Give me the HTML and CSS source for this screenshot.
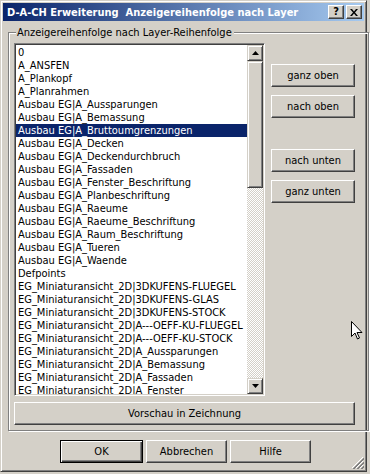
FILE: index.html
```html
<!DOCTYPE html>
<html lang="de">
<head>
    <meta charset="UTF-8">
    <title>D-A-CH Erweiterung Anzeigereihenfolge nach Layer</title>
    <link rel="stylesheet" href="styles.css">
</head>
<body>

<div class="window">
    <div class="titlebar">
        <span class="title">D-A-CH Erweiterung&nbsp; Anzeigereihenfolge nach Layer</span>
        <div class="caption-buttons">
            <span class="cap-btn help">?</span>
            <span class="cap-btn">
                <svg width="8" height="7" viewBox="0 0 8 7"><path d="M0 0h2l2 2.5 2-2.5h2l-3 3.5 3 3.5h-2l-2-2.5-2 2.5h-2l3-3.5z" fill="#000"/></svg>
            </span>
        </div>
    </div>

    <div class="client">
        <div class="group">
            <span class="group-label">Anzeigereihenfolge nach Layer-Reihenfolge</span>
            <div class="group-main">
                <div class="listbox">
                    <ul class="items">
                        <li>0</li>
                        <li>A_ANSFEN</li>
                        <li>A_Plankopf</li>
                        <li>A_Planrahmen</li>
                        <li>Ausbau EG|A_Aussparungen</li>
                        <li>Ausbau EG|A_Bemassung</li>
                        <li class="selected">Ausbau EG|A_Bruttoumgrenzungen</li>
                        <li>Ausbau EG|A_Decken</li>
                        <li>Ausbau EG|A_Deckendurchbruch</li>
                        <li>Ausbau EG|A_Fassaden</li>
                        <li>Ausbau EG|A_Fenster_Beschriftung</li>
                        <li>Ausbau EG|A_Planbeschriftung</li>
                        <li>Ausbau EG|A_Raeume</li>
                        <li>Ausbau EG|A_Raeume_Beschriftung</li>
                        <li>Ausbau EG|A_Raum_Beschriftung</li>
                        <li>Ausbau EG|A_Tueren</li>
                        <li>Ausbau EG|A_Waende</li>
                        <li>Defpoints</li>
                        <li>EG_Miniaturansicht_2D|3DKUFENS-FLUEGEL</li>
                        <li>EG_Miniaturansicht_2D|3DKUFENS-GLAS</li>
                        <li>EG_Miniaturansicht_2D|3DKUFENS-STOCK</li>
                        <li>EG_Miniaturansicht_2D|A---OEFF-KU-FLUEGEL</li>
                        <li>EG_Miniaturansicht_2D|A---OEFF-KU-STOCK</li>
                        <li>EG_Miniaturansicht_2D|A_Aussparungen</li>
                        <li>EG_Miniaturansicht_2D|A_Bemassung</li>
                        <li>EG_Miniaturansicht_2D|A_Fassaden</li>
                        <li>EG_Miniaturansicht_2D|A_Fenster</li>
                    </ul>
                    <div class="scrollbar">
                        <div class="sb-btn">
                            <svg width="7" height="4" viewBox="0 0 7 4"><path d="M3.5 0L7 4H0z" fill="#000"/></svg>
                        </div>
                        <div class="sb-track">
                            <div class="sb-thumb"></div>
                        </div>
                        <div class="sb-btn">
                            <svg width="7" height="4" viewBox="0 0 7 4"><path d="M0 0h7L3.5 4z" fill="#000"/></svg>
                        </div>
                    </div>
                </div>
                <div class="side">
                    <button class="btn">ganz oben</button>
                    <button class="btn">nach oben</button>
                    <button class="btn spaced">nach unten</button>
                    <button class="btn">ganz unten</button>
                </div>
            </div>
            <button class="btn wide">Vorschau in Zeichnung</button>
        </div>

        <div class="footer">
            <button class="btn default">OK</button>
            <button class="btn">Abbrechen</button>
            <button class="btn">Hilfe</button>
        </div>

        <svg class="grip" width="12" height="12" viewBox="0 0 12 12">
            <path d="M11 0L0 11M11 4L4 11M11 8L8 11" stroke="#fff" stroke-width="1"/>
            <path d="M12 1L1 12M12 2L2 12M12 5L5 12M12 6L6 12M12 9L9 12M12 10L10 12" stroke="#808080" stroke-width="1"/>
        </svg>
    </div>

    <svg class="cursor" width="12" height="20" viewBox="0 0 12 20">
        <path d="M0.5 0.5v15l3.5-3.5 2.5 6 2-1-2.5-5.5h5z" fill="#fff" stroke="#000" stroke-width="1" stroke-linejoin="miter"/>
    </svg>
</div>

</body>
</html>
```

FILE: styles.css
```css
body {
    margin: 0;
    background: #d4d0c8;
    font-family: "DejaVu Sans Condensed", "DejaVu Sans", sans-serif;
    font-stretch: condensed;
    font-size: 11px;
    color: #000;
}

.window {
    position: relative;
    width: 367px;
    height: 472px;
    box-sizing: border-box;
    padding: 2px;
    border: 1px solid;
    border-color: #d4d0c8 #404040 #404040 #d4d0c8;
    box-shadow: inset 1px 1px #fff, inset -1px -1px #808080;
    display: flex;
    flex-direction: column;
}

/* title bar */
.titlebar {
    height: 18px;
    display: flex;
    align-items: center;
    justify-content: space-between;
    padding: 0 2px 0 4px;
    background: linear-gradient(to right, #0a246a, #a6caf0);
}
.title {
    color: #fff;
    font-weight: bold;
    font-size: 11px;
    white-space: nowrap;
}
.caption-buttons {
    display: flex;
    gap: 2px;
}
.cap-btn {
    width: 14px;
    height: 12px;
    display: flex;
    align-items: center;
    justify-content: center;
    background: #d4d0c8;
    border: 1px solid;
    border-color: #fff #404040 #404040 #fff;
    box-shadow: inset -1px -1px #808080;
}
.cap-btn.help {
    font-weight: bold;
    font-size: 11px;
    line-height: 12px;
}

/* client area */
.client {
    position: relative;
    flex: 1;
    padding: 11px 0 0 5px;
}

.group {
    position: relative;
    width: 350px;
    padding: 10px 4px 5px 5px;
    border: 1px solid #808080;
    box-shadow: inset 1px 1px #fff, 1px 1px #fff;
}
.group-label {
    position: absolute;
    top: -7px;
    left: 7px;
    padding: 0 2px 0 1px;
    background: #d4d0c8;
    line-height: 13px;
}
.group-main {
    display: flex;
    align-items: flex-start;
}

/* list box */
.listbox {
    width: 247px;
    height: 349px;
    padding: 1px;
    border: 1px solid;
    border-color: #808080 #fff #fff #808080;
    box-shadow: inset 1px 1px #404040, inset -1px -1px #d4d0c8;
    display: flex;
    background: #fff;
}
.items {
    flex: 1;
    list-style: none;
    margin: 0;
    padding: 1px 0 0;
    overflow: hidden;
}
.items li {
    height: 13px;
    line-height: 13px;
    padding-left: 2px;
    white-space: nowrap;
}
.items li.selected {
    background: #0a246a;
    color: #fff;
}

.scrollbar {
    width: 16px;
    display: flex;
    flex-direction: column;
}
.sb-btn {
    width: 14px;
    height: 14px;
    display: flex;
    align-items: center;
    justify-content: center;
    background: #d4d0c8;
    border: 1px solid;
    border-color: #d4d0c8 #404040 #404040 #d4d0c8;
    box-shadow: inset 1px 1px #fff, inset -1px -1px #808080;
}
.sb-track {
    flex: 1;
    background: repeating-conic-gradient(#d4d0c8 0 25%, #fff 0 50%) 0 0 / 2px 2px;
}
.sb-thumb {
    height: 125px;
    background: #d4d0c8;
    border: 1px solid;
    border-color: #d4d0c8 #404040 #404040 #d4d0c8;
    box-shadow: inset 1px 1px #fff, inset -1px -1px #808080;
}

/* push buttons */
.btn {
    height: 23px;
    padding: 0;
    font: inherit;
    color: #000;
    background: #d4d0c8;
    border: 1px solid;
    border-color: #fff #404040 #404040 #fff;
    box-shadow: inset -1px -1px #808080;
}
.btn.default {
    border-color: #000;
    box-shadow: inset 1px 1px #fff, inset -1px -1px #404040, inset -2px -2px #808080;
}

.side {
    margin: 21px 0 0 6px;
    display: flex;
    flex-direction: column;
    gap: 8px;
}
.side .btn {
    width: 84px;
}
.side .btn.spaced {
    margin-top: 23px;
}
.btn.wide {
    width: 341px;
    margin-top: 6px;
    display: block;
}

.footer {
    display: flex;
    gap: 3px;
    margin: 9px 0 0 52px;
}
.footer .btn {
    width: 81px;
}
.footer .btn.default {
    width: 83px;
}

.grip {
    position: absolute;
    right: 0;
    bottom: 0;
}

.cursor {
    position: absolute;
    left: 350px;
    top: 320px;
}
```
